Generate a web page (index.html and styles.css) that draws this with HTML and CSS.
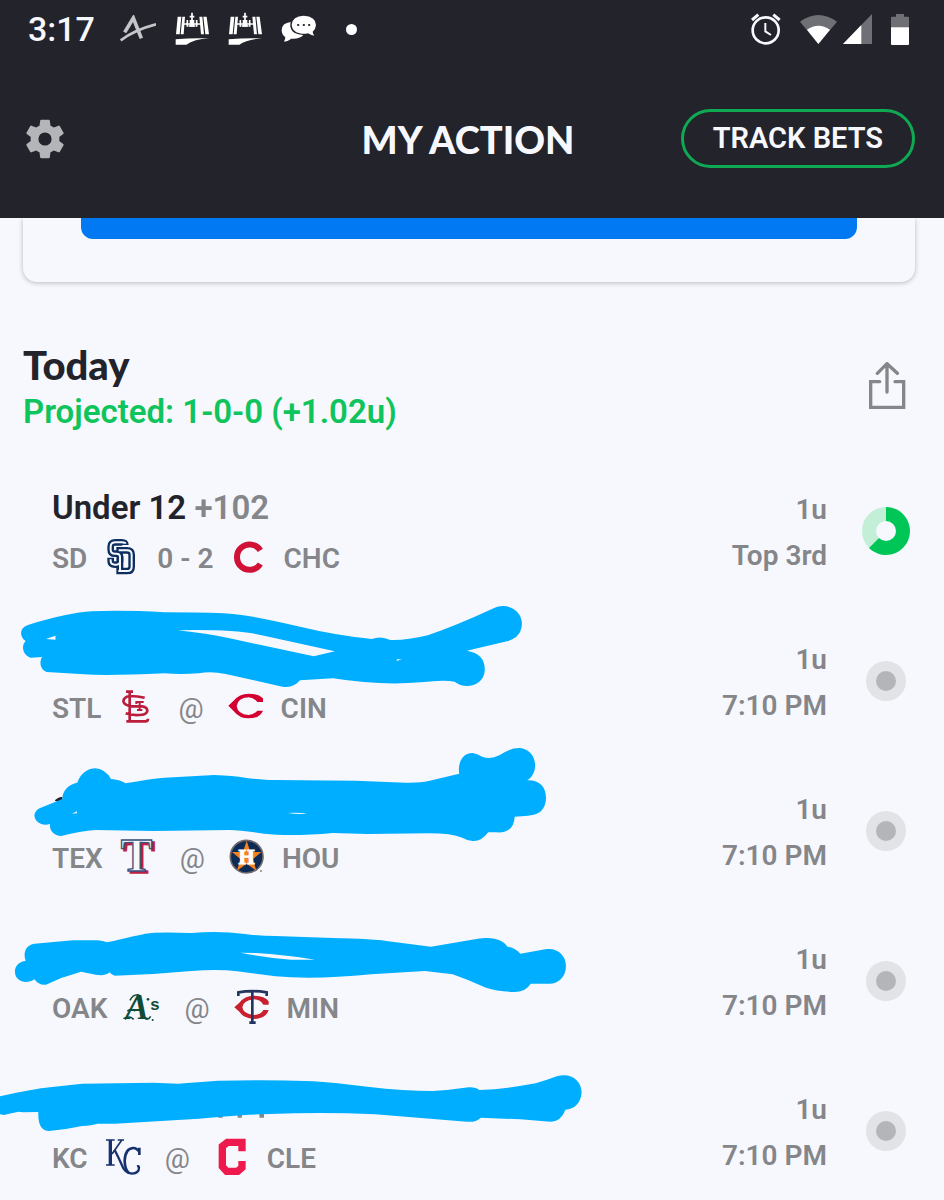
FILE: index.html
```
<!DOCTYPE html>
<html lang="en">
<head>
  <meta charset="UTF-8" />
  <meta name="viewport" content="width=device-width, initial-scale=1.0"/>
  <title>My Action</title>
  <link rel="stylesheet" href="styles.css">
</head>
<body>
  <header>
    <div class="status-bar">
      <span class="clock">3:17</span>
      <svg width="36" height="28" viewBox="120 48 108 84" fill="none" stroke="#c4c5c8">
        <path d="M122 124Q165 92 228 76" stroke-width="8"/>
        <path d="M134 100L160 57L184 118" stroke-width="11"/>
      </svg>
      <svg width="34" height="34" viewBox="525 38 102 102">
        <use href="#station"/>
      </svg>
      <svg width="34" height="34" viewBox="525 38 102 102">
        <g id="station">
          <path d="M533 52h11l-5 53h-11zM547 52h8l-4 53h-9zM598 52h9l5 53h-9zM610 52h10l7 53h-11z" fill="#fff"/>
          <path d="M550 74h54M562 62v20M590 62v20M576 40v42M569 52h14M566 80h20" stroke="#fff" stroke-width="5"/>
          <path d="M569 62h14v20h-14z" fill="#fff"/>
          <path d="M527 120q50-5 100-3q-45 3-68 19h-32z" fill="#fff"/>
        </g>
      </svg>
      <svg width="35" height="28" viewBox="845 46 105 84">
        <path d="M847 92q0-22 27-25q-8 36 38 39q-12 13-36 11q-10 8-22 9q4-7 4-13q-11-8-11-21z" fill="#fff"/>
        <path d="M877 75q2-26 36-27q36 2 37 28q-1 13-10 20q1 7 5 12q-11-1-19-7q-12 3-25 0q-23-6-24-26z" fill="#fff"/>
        <path d="M896 76h1M913 76h1M929 76h1" stroke="#22232b" stroke-width="6" stroke-linecap="round"/>
      </svg>
      <span class="more-dot"></span>
      <svg class="push-right" width="30" height="32" viewBox="66 38 90 96" fill="none" stroke="#f7f8fd">
        <circle cx="110" cy="90" r="39" stroke-width="8"/>
        <path d="M109 68v25l17 11" stroke-width="6"/>
        <path d="M69 59l19-16M133 43l19 16" stroke-width="9"/>
      </svg>
      <svg width="37" height="29" viewBox="210 42 111 87">
        <path d="M265 129L210 62q55-40 111 0z" fill="#6f7076"/>
        <path d="M265 129L231 86q34-24 69 0z" fill="#fff"/>
      </svg>
      <svg class="signal" width="29" height="30" viewBox="338 43 87 90">
        <path d="M338 133L425 43v90z" fill="#6f7076"/>
        <path d="M338 133L393 76v57z" fill="#fff"/>
      </svg>
      <svg width="18" height="31" viewBox="480 40 54 93">
        <path d="M480 51q0-3 3-3h12v-8h24v8h12q3 0 3 3v30h-54z" fill="#6f7076"/>
        <path d="M480 80h54v50q0 3-3 3h-48q-3 0-3-3z" fill="#fff"/>
      </svg>
    </div>

    <div class="nav-bar">
      <button class="icon-button" aria-label="Settings">
        <svg width="48" height="48" viewBox="0 0 24 24">
          <path fill="#b4b5b9" d="M19.14 12.94c.04-.3.06-.61.06-.94s-.02-.64-.07-.94l2.03-1.58c.18-.14.23-.41.12-.61l-1.92-3.32c-.12-.22-.37-.29-.59-.22l-2.39.96c-.5-.38-1.03-.7-1.62-.94l-.36-2.54c-.04-.24-.24-.41-.48-.41h-3.84c-.24 0-.43.17-.47.41l-.36 2.54c-.59.24-1.13.57-1.62.94l-2.39-.96c-.22-.08-.47 0-.59.22L2.74 8.87c-.12.21-.08.47.12.61l2.03 1.58c-.05.3-.09.63-.09.94s.02.64.07.94l-2.03 1.58c-.18.14-.23.41-.12.61l1.92 3.32c.12.22.37.29.59.22l2.39-.96c.5.38 1.03.7 1.62.94l.36 2.54c.05.24.24.41.48.41h3.84c.24 0 .44-.17.47-.41l.36-2.54c.59-.24 1.13-.56 1.62-.94l2.39.96c.22.08.47 0 .59-.22l1.92-3.32c.12-.22.07-.47-.12-.61l-2.01-1.58zM12 15.3a3.3 3.3 0 1 1 0-6.6a3.3 3.3 0 0 1 0 6.6z"/>
        </svg>
      </button>
      <h1>MY ACTION</h1>
      <button class="track-button">TRACK BETS</button>
    </div>
  </header>

  <main>
    <section class="card">
      <button class="card-button" aria-label="Open"></button>
    </section>

    <section class="day">
      <div>
        <h2>Today</h2>
        <p class="projected">Projected: 1-0-0 (+1.02u)</p>
      </div>
      <button class="icon-button share" aria-label="Share">
        <svg width="37" height="47" viewBox="506 65 111 141" fill="none" stroke="#85868a" stroke-width="10" stroke-linecap="round">
          <path d="M538 124h-27v77h99v-77h-26M560 155V71M531 99l29-29l31 29"/>
        </svg>
      </button>
    </section>

    <ul class="bets">
      <li class="bet">
        <div class="info">
          <p class="pick">Under 12 <span>+102</span></p>
          <p class="teams">
            <span>SD</span>
            <svg class="logo" viewBox="195 183 108 108" fill="none">
              <g stroke="#0d2f5f" stroke-width="20">
                <path d="M259 198Q259 190 248 190H230Q215 190 215 203V212Q215 224 228 224H232Q243 224 243 234V246Q243 257 232 257H228Q215 257 215 246V236"/>
                <path d="M232 214H264Q278 214 278 227V263Q278 276 264 276H232M243 276V232"/>
              </g>
              <g stroke="#f7f8fd" stroke-width="6">
                <path d="M259 194Q259 190 248 190H230Q215 190 215 203V212Q215 224 228 224H232Q243 224 243 234V246Q243 257 232 257H228Q215 257 215 246V241"/>
                <path d="M239 214H264Q278 214 278 227V263Q278 276 264 276H238M243 276V238"/>
              </g>
            </svg>
            <span>0 - 2</span>
            <svg class="logo" viewBox="579 183 108 108" fill="none">
              <path d="M667 214A38 38 0 1 0 667 255" stroke="#d01236" stroke-width="18"/>
            </svg>
            <span>CHC</span>
          </p>
        </div>
        <div class="result">
          <p>1u</p>
          <p>Top 3rd</p>
        </div>
        <svg class="progress" viewBox="0 0 48 48">
          <circle cx="24" cy="24" r="24" fill="#c4efd7"/>
          <path d="M24 24V0A24 24 0 1 1 7 41z" fill="#00c657"/>
          <circle cx="24" cy="24" r="10" fill="#f7f8fd"/>
        </svg>
      </li>

      <li class="bet">
        <div class="info">
          <p class="pick"></p>
          <p class="teams">
            <span>STL</span>
            <svg class="logo" viewBox="57 32 108 108" fill="none" stroke="#bb1e3c" stroke-width="8">
              <path d="M92 36V125M81 37H102M82 126H139Q147 126 147 118M137 55Q118 50 92 50Q74 53 73 66Q76 80 100 81H130Q145 83 145 95Q143 107 120 107Q96 108 80 102"/>
              <path d="M112 74V68H134M122 68V92M114 92H130" stroke-width="6"/>
            </svg>
            <span class="at">@</span>
            <svg class="logo" viewBox="386 32 108 108">
              <path fill="#d50032" d="M387 79L402 65Q420 43 448 43Q476 43 491 57V68H474Q464 55 448 54Q415 56 412 80Q415 105 448 107Q464 106 474 94H491Q482 117 448 117Q420 117 402 94z"/>
            </svg>
            <span>CIN</span>
          </p>
        </div>
        <div class="result">
          <p>1u</p>
          <p>7:10 PM</p>
        </div>
        <svg class="progress" viewBox="0 0 48 48">
          <circle cx="24" cy="24" r="20" fill="#e2e3e7"/>
          <circle cx="24" cy="24" r="10" fill="#b4b5b8"/>
        </svg>
        <svg class="marker" viewBox="0 0 1568 330" preserveAspectRatio="none">
          <path fill="#00aeff" fill-rule="evenodd" d="M75 104Q180 68 240 64Q320 60 430 67Q540 67 600 71Q660 76 790 112Q880 137 972 147Q995 136 1020 150Q1060 152 1118 136Q1190 108 1290 55C1325 35 1364 62 1364 100Q1364 142 1325 154L1220 182Q1267 190 1267 240C1265 288 1215 300 1188 275Q1160 268 1100 277Q990 287 870 265L784 271Q766 296 738 290L590 252Q550 243 520 250Q470 254 430 250Q280 258 220 253L122 246C105 240 102 215 110 201L80 203C60 196 54 168 67 153C50 140 50 112 75 104zM120 147L145 149V137zM465 121Q540 130 600 145L820 199L875 184L690 137Q620 117 465 121zM1037 208V213L1050 208z"/>
        </svg>
      </li>

      <li class="bet">
        <div class="info">
          <p class="pick"></p>
          <p class="teams">
            <span>TEX</span>
            <svg class="logo" viewBox="62 480 108 108" font-family="Liberation Serif" font-size="142" font-weight="bold">
              <text x="72" y="580" fill="#c01f42" stroke="#c01f42" stroke-width="5">T</text>
              <text x="64" y="574" fill="#f7f8fd" stroke="#3a5384" stroke-width="4">T</text>
            </svg>
            <span class="at">@</span>
            <svg class="logo" viewBox="388 480 108 108">
              <circle cx="441" cy="530" r="49" fill="#0c2c56" stroke="#70686b" stroke-width="5"/>
              <path fill="#f58220" d="M441 482L452 516H485L460 537L470 572L441 551L412 572L422 537L397 516H430z"/>
              <text x="441" y="553" text-anchor="middle" font-family="Liberation Serif" font-size="62" font-weight="bold" fill="#fff" stroke="#fff" stroke-width="3">H</text>
              <circle cx="484" cy="573" r="3" fill="#85868a"/>
            </svg>
            <span>HOU</span>
          </p>
        </div>
        <div class="result">
          <p>1u</p>
          <p>7:10 PM</p>
        </div>
        <svg class="progress" viewBox="0 0 48 48">
          <circle cx="24" cy="24" r="20" fill="#e2e3e7"/>
          <circle cx="24" cy="24" r="10" fill="#b4b5b8"/>
        </svg>
        <svg class="marker" viewBox="0 0 1568 330" preserveAspectRatio="none">
          <path fill="#22232b" d="M143 183Q150 171 163 170V186z"/>
          <path fill="#00aeff" fill-rule="evenodd" d="M110 202L163 177C163 150 180 133 202 128C212 98 230 85 250 85Q275 87 290 117Q312 118 328 130Q390 117 430 113L560 105Q610 107 640 113Q690 120 715 120L930 122L1060 128Q1100 129 1120 123L1200 101C1195 60 1215 38 1235 39Q1247 41 1260 50Q1282 59 1305 46Q1335 22 1360 24C1402 30 1412 95 1378 121C1410 120 1427 140 1427 175C1425 218 1400 226 1380 227L1345 230Q1343 280 1298 277L1276 277Q1258 305 1235 303Q1222 302 1208 293Q1180 280 1120 280L960 282L870 279Q760 290 690 281Q630 271 600 270L400 273L250 270Q210 273 160 288C140 288 128 270 131 252C110 260 90 245 90 226Q92 208 110 202zM188 221L201 220V214zM752 219Q778 224 803 221Q780 217 752 219z"/>
        </svg>
      </li>

      <li class="bet">
        <div class="info">
          <p class="pick"></p>
          <p class="teams">
            <span>OAK</span>
            <svg class="logo" viewBox="108 29 108 108" fill="#0f4b38">
              <text x="111" y="117" font-family="Liberation Serif" font-size="108" font-style="italic" font-weight="bold">A</text>
              <path d="M111 117q12-14 26 0M126 60q10-20 28-16M118 92q14-8 24 0M168 110q10 14 20-2" fill="none" stroke="#0f4b38" stroke-width="5"/>
              <text x="187" y="88" font-family="Liberation Sans" font-size="50" font-weight="bold">s</text>
              <circle cx="180" cy="57" r="4"/>
              <circle cx="194" cy="119" r="3"/>
            </svg>
            <span class="at">@</span>
            <svg class="logo" viewBox="436 29 108 108">
              <path fill="#c8202f" d="M437 81L452 67Q468 46 495 46Q529 47 540 63V73H524Q516 58 495 57Q463 61 461 81Q463 101 495 104Q518 103 524 89H540Q532 115 495 116Q466 114 452 94z"/>
              <path d="M491 33V126M482 127H501M449 47V36Q491 29 534 36V47" fill="none" stroke="#24365f" stroke-width="8"/>
            </svg>
            <span>MIN</span>
          </p>
        </div>
        <div class="result">
          <p>1u</p>
          <p>7:10 PM</p>
        </div>
        <svg class="progress" viewBox="0 0 48 48">
          <circle cx="24" cy="24" r="20" fill="#e2e3e7"/>
          <circle cx="24" cy="24" r="10" fill="#b4b5b8"/>
        </svg>
        <svg class="marker" viewBox="0 -90 1568 330" preserveAspectRatio="none">
          <path fill="#00aeff" fill-rule="evenodd" d="M90 71L190 61H255Q268 62 280 67Q350 48 380 41Q410 35 500 39Q570 31 640 42Q680 48 720 48L870 54Q970 55 1030 66L1126 80L1245 57C1290 48 1315 60 1326 80Q1345 82 1360 101L1425 88C1460 82 1480 110 1479 140C1478 175 1455 192 1435 191H1387Q1372 218 1340 216Q1300 214 1270 203Q1225 180 1183 163L1110 153L970 163Q820 180 720 169L620 154Q570 147 500 153L400 162L300 167Q290 164 287 157Q275 169 250 164L212 155L160 174L120 194Q102 197 90 178C75 190 55 188 45 175C30 150 45 124 67 123C60 100 66 75 90 71zM628 98Q700 114 760 119H823Q740 104 670 99z"/>
        </svg>
      </li>

      <li class="bet">
        <div class="info">
          <p class="pick"></p>
          <p class="teams">
            <span>KC</span>
            <svg class="logo" viewBox="45 477 108 108" fill="none" stroke="#17306f">
              <path d="M61 477V552" stroke-width="10"/>
              <path d="M48 477H74M48 552H74M83 477H102M95 478L66 519" stroke-width="5"/>
              <path d="M74 507Q87 532 95 551Q104 577 126 578Q147 576 147 560Q147 554 141 556" stroke-width="7"/>
              <path d="M148 500V522M147 511Q139 500 129 501Q105 503 104 540Q105 566 116 575" stroke-width="8"/>
            </svg>
            <span class="at">@</span>
            <svg class="logo" viewBox="371 477 108 108" fill="none">
              <path d="M455 511V484H411L396 496V557L409 571H442L455 560V540" stroke="#ee1a4d" stroke-width="22"/>
            </svg>
            <span>CLE</span>
          </p>
        </div>
        <div class="result">
          <p>1u</p>
          <p>7:10 PM</p>
        </div>
        <svg class="progress" viewBox="0 0 48 48">
          <circle cx="24" cy="24" r="20" fill="#e2e3e7"/>
          <circle cx="24" cy="24" r="10" fill="#b4b5b8"/>
        </svg>
        <svg class="marker" viewBox="0 -60 1568 330" preserveAspectRatio="none">
          <path fill="#85868a" d="M570 165h12v8h-12zM621 165h11v8h-11zM678 160h12v13h-12z"/>
          <path fill="#00aeff" d="M0 109Q90 86 130 82L215 71L400 68L465 71L570 62Q700 58 820 64Q890 69 960 80Q1060 93 1130 93Q1180 90 1225 82Q1243 81 1253 90Q1320 87 1400 70Q1425 62 1455 49C1490 36 1520 60 1520 98C1518 130 1500 147 1478 149Q1465 186 1438 185L1360 178L1257 173Q1242 188 1220 185L1100 174L980 163Q870 157 770 160L650 164L570 171L520 176L300 191H255Q240 196 215 198Q170 209 128 213C102 212 100 180 100 156L60 157L48 155L10 165L0 163z"/>
        </svg>
      </li>
    </ul>
  </main>
</body>
</html>
```
FILE: styles.css
```
* {
  box-sizing: border-box;
}
body {
  font-family: Roboto, sans-serif;
  background-color: #f7f8fd;
  color: #22232b;
  margin: 0;
}
h1, h2, p, ul {
  margin: 0;
  padding: 0;
}
svg {
  display: block;
  flex-shrink: 0;
}
button {
  font-family: inherit;
  cursor: pointer;
}
header {
  background-color: #22232b;
  color: #f7f8fd;
  padding-bottom: 50px;
}

/* phone status bar */
.status-bar {
  display: flex;
  align-items: center;
  gap: 19px;
  height: 58px;
  padding: 0 35px 0 28px;
}
.clock {
  font-size: 34px;
  font-weight: 500;
  margin-right: 6px;
}
.more-dot {
  width: 11px;
  height: 11px;
  border-radius: 50%;
  background-color: #fff;
  margin-left: 11px;
}
.push-right {
  margin-left: auto;
}
.signal {
  margin-left: -13px;
}

.nav-bar {
  display: grid;
  grid-template-columns: 1fr auto 1fr;
  align-items: center;
  padding: 51px 29px 0 21px;
}
h1, h2 {
  font-family: Lato, sans-serif;
  font-weight: 900;
  font-size: 38px;
  line-height: 46px;
}
h2 {
  font-size: 40px;
}
.icon-button {
  justify-self: start;
  padding: 0;
  border: none;
  background: none;
}
.track-button {
  justify-self: end;
  padding: 10px 29px;
  border: 3px solid #0fa954;
  border-radius: 30px;
  background: none;
  color: #f7f8fd;
  font-size: 29px;
  font-weight: 600;
  line-height: 33px;
}

.card {
  margin: 0 29px 0 23px;
  padding: 0 58px 43px;
  border-radius: 0 0 14px 14px;
  box-shadow: 0 1px 5px rgba(0, 0, 0, 0.25);
  clip-path: inset(0 -8px -8px);
}
.card-button {
  display: block;
  width: 100%;
  height: 21px;
  padding: 0;
  border: none;
  border-radius: 0 0 12px 12px;
  background-color: #0079f2;
}

.day {
  display: flex;
  align-items: center;
  justify-content: space-between;
  padding: 60px 38px 48px 23px;
}
.share {
  margin-bottom: 6px;
}
.projected {
  color: #0fc45c;
  font-size: 33px;
  font-weight: 600;
  line-height: 47px;
}

.bets {
  list-style: none;
}
.bet {
  position: relative;
  display: flex;
  align-items: flex-start;
  padding: 0 34px 50px 52px;
}
.bet:last-child {
  padding-bottom: 16px;
}
.info {
  flex: 1;
}
.pick {
  height: 50px;
  font-size: 33px;
  font-weight: 600;
  line-height: 50px;
}
.pick span {
  color: #85868a;
}
.teams {
  display: flex;
  align-items: center;
  gap: 17px;
  height: 50px;
}
.teams, .result {
  color: #85868a;
  font-size: 28px;
  font-weight: 600;
}
.at {
  font-weight: 400;
  padding: 0 7px;
}
.logo {
  width: 36px;
  height: 36px;
  overflow: visible;
}
.result {
  padding-top: 4px;
  line-height: 46px;
  text-align: right;
}
.progress {
  width: 48px;
  height: 48px;
  margin: 24px 0 0 35px;
}

/* pen strokes drawn over the hidden picks */
.marker {
  position: absolute;
  top: -43px;
  left: 0;
  width: 600px;
  height: 110px;
}
```
